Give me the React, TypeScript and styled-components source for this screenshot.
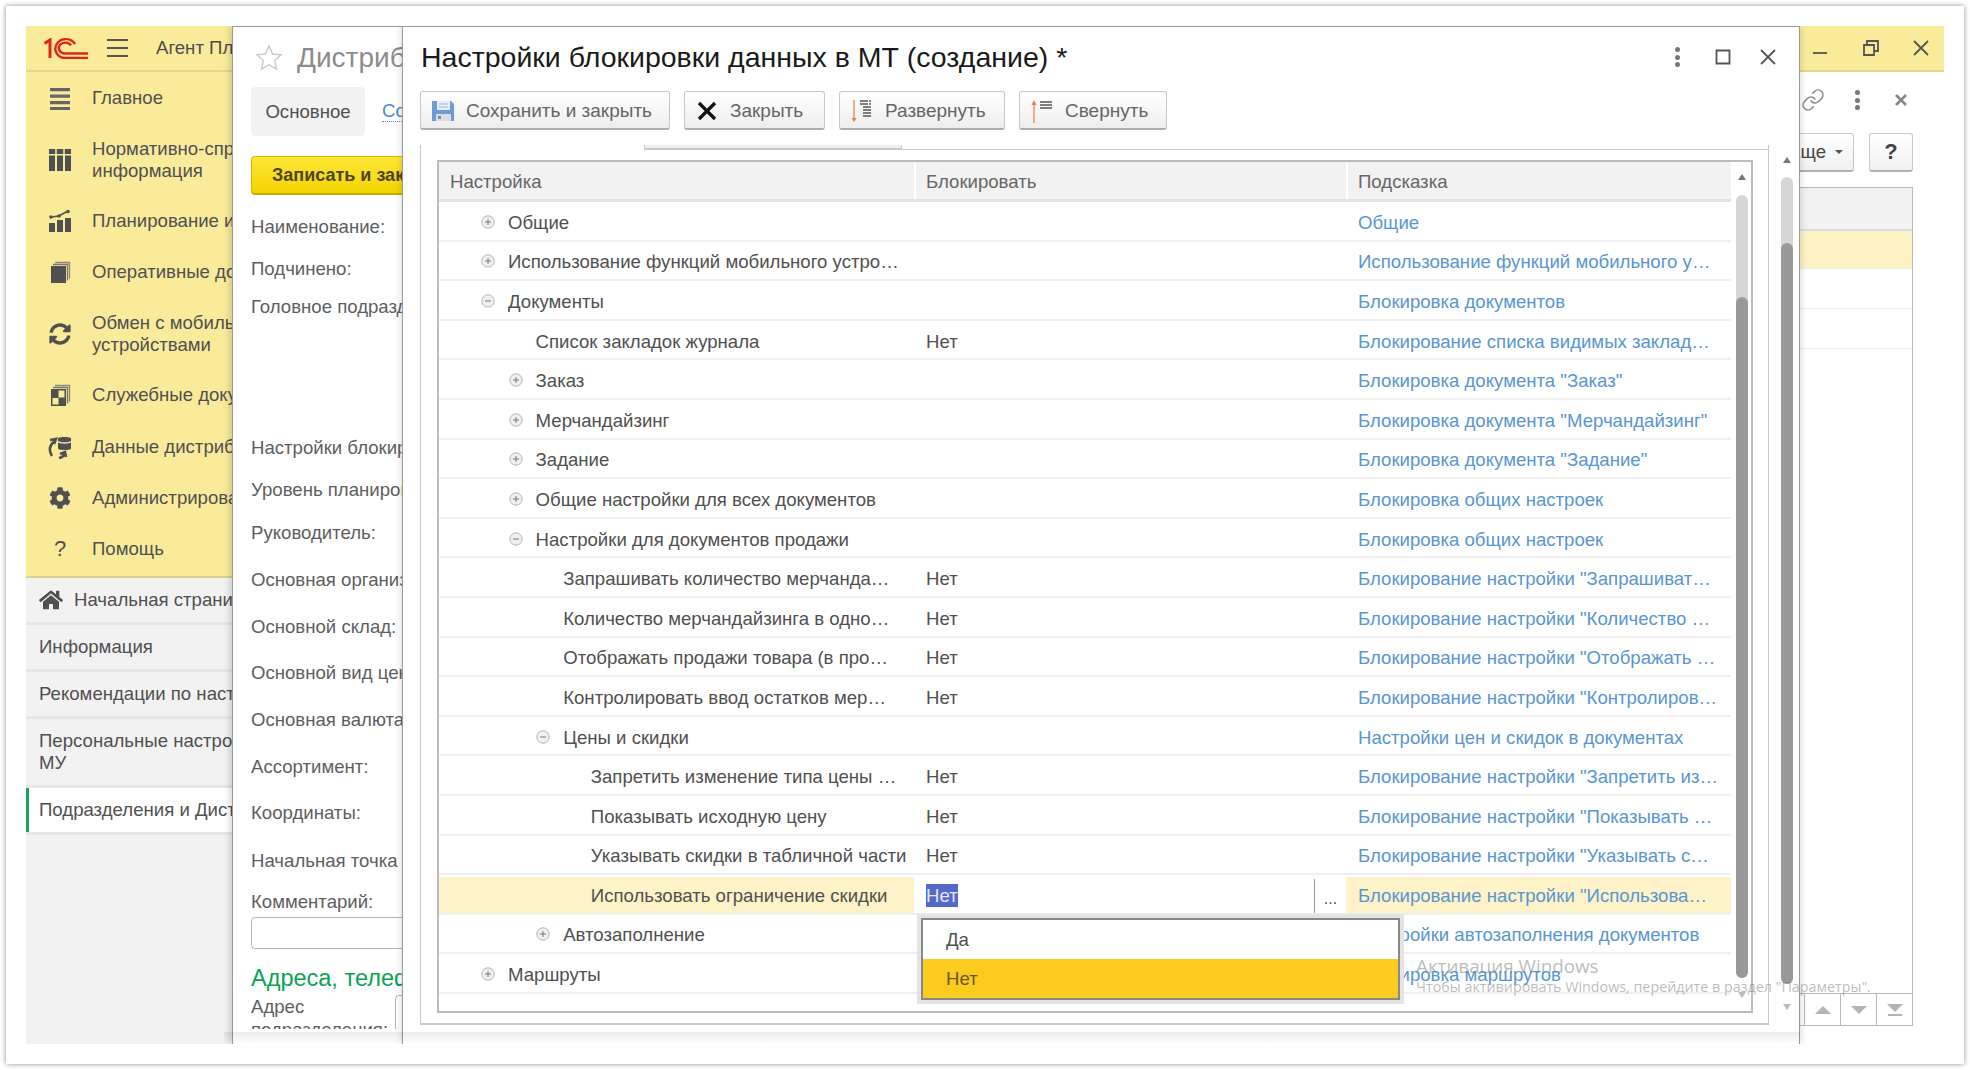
import React from "react";
import styled, { createGlobalStyle } from "styled-components";
import { Link as LinkIcon } from "lucide-react";
import { FaCog, FaHome, FaSyncAlt } from "react-icons/fa";

const FONT = `"Liberation Sans", Arial, sans-serif`;

const GlobalStyle = createGlobalStyle`
  html, body {
    margin: 0;
    padding: 0;
    width: 1970px;
    height: 1070px;
    overflow: hidden;
    background: #ffffff;
    font-family: ${FONT};
  }
  * { box-sizing: border-box; }
`;

const Screen = styled.div`
  width: 1958px;
  height: 1058px;
  margin: 6px;
  padding: 20px;
  background: #ffffff;
  box-shadow: 0 0 5px rgba(0, 0, 0, 0.45);
`;

const Desktop = styled.div`
  position: relative;
  width: 1918px;
  height: 1018px;
  overflow: hidden;
  background: #ffffff;
  font-size: 18.6px;
  color: #505050;
`;

const TopBar = styled.div`
  height: 46px;
  display: flex;
  align-items: center;
  background: #faeb9b;
  border-bottom: 2px solid #e2d68c;
  color: #4d4d4d;
`;

const Logo = styled.svg`
  width: 44px;
  height: 21px;
  margin-left: 18px;
`;

const Burger = styled.svg`
  width: 21px;
  height: 18px;
  margin-left: 19px;
`;

const AppName = styled.span`
  margin-left: 28px;
  white-space: nowrap;
`;

const WinControls = styled.div`
  margin-left: auto;
  display: flex;
  align-items: center;
  margin-right: 13px;
  gap: 30px;
`;

const WinIcon = styled.svg`
  width: 20px;
  height: 20px;
  stroke: #555;
  stroke-width: 1.8;
  fill: none;
`;

const Body = styled.div`
  display: flex;
  height: 972px;
`;

const Sidebar = styled.div`
  width: 206px;
  flex: none;
  display: flex;
  flex-direction: column;
  overflow: hidden;
  background: #f2f2f2;
`;

const MainMenu = styled.div`
  background: #faeb9b;
  border-bottom: 2px solid #ddd08a;
`;

const MenuItem = styled.div<{ $h: number }>`
  height: ${(p) => p.$h}px;
  display: flex;
  align-items: center;
  white-space: nowrap;
  line-height: 22px;
`;

const MenuIcon = styled.div`
  width: 66px;
  flex: none;
  display: flex;
  justify-content: center;
  padding-left: 2px;
  color: #505050;
  font-size: 22px;
`;

const Svg22 = styled.svg`
  width: 24px;
  height: 24px;
  fill: #505050;
`;

const OpenItem = styled.div<{ $h: number; $active?: boolean }>`
  height: ${(p) => p.$h}px;
  flex: none;
  display: flex;
  align-items: center;
  gap: 11px;
  padding-left: 13px;
  white-space: nowrap;
  line-height: 22px;
  border-bottom: 3px solid #e6e6e6;
  background: ${(p) => (p.$active ? "#ffffff" : "transparent")};
  box-shadow: ${(p) => (p.$active ? "inset 3px 0 0 #19a35a" : "none")};
  svg {
    flex: none;
  }
`;

const Content = styled.div`
  flex: 1;
  min-width: 0;
  display: flex;
  flex-direction: column;
  align-items: flex-end;
  padding-right: 31px;
`;

const FormActions = styled.div`
  height: 56px;
  display: flex;
  align-items: center;
  gap: 30px;
  padding-right: 6px;
`;

const Dots = styled.span`
  display: flex;
  flex-direction: column;
  gap: 2.5px;
  i {
    display: block;
    width: 5px;
    height: 5px;
    border-radius: 50%;
    background: #777;
  }
`;

const SmallClose = styled.svg`
  width: 12px;
  height: 12px;
  margin-left: 5px;
  stroke: #888;
  stroke-width: 2.6;
`;

const FormButtons = styled.div`
  margin-top: 5px;
  display: flex;
  gap: 15px;
`;

const MoreButton = styled.div<{ $w: number }>`
  width: ${(p) => p.$w}px;
  height: 39px;
  display: flex;
  align-items: center;
  justify-content: center;
  color: #444;
  background: linear-gradient(#ffffff, #f1f1f1);
  border: 1px solid #c8c8c8;
  border-bottom: 2px solid #b0b0b0;
  border-radius: 3px;
`;

const AllActionsButton = styled(MoreButton)`
  justify-content: flex-end;
  gap: 9px;
  padding-right: 10px;
`;

const Caret = styled.span`
  border-top: 4px solid #555;
  border-left: 4px solid transparent;
  border-right: 4px solid transparent;
`;

const Help = styled.span`
  font-size: 22px;
  font-weight: bold;
  color: #444;
`;

const BackTable = styled.div`
  margin-top: 15px;
  width: 1681px;
  height: 839px;
  display: flex;
  flex-direction: column;
  border: 1.5px solid #b8b8b8;
`;

const BackHead = styled.div`
  height: 43px;
  flex: none;
  background: #f2f2f2;
  border-bottom: 2px solid #dcdcdc;
`;

const BackRow = styled.div<{ $h: number; $selected?: boolean }>`
  height: ${(p) => p.$h}px;
  flex: none;
  background: ${(p) => (p.$selected ? "#fdf2c4" : "#ffffff")};
  border-bottom: 1px solid #ececec;
`;

const Nav = styled.div`
  margin-top: auto;
  height: 32px;
  display: flex;
  justify-content: flex-end;
  border-top: 1.5px solid #b8b8b8;
`;

const NavCell = styled.div`
  width: 36px;
  display: flex;
  align-items: center;
  justify-content: center;
  border-left: 1.5px solid #b8b8b8;
`;

const NavIcon = styled.svg`
  width: 18px;
  height: 14px;
  fill: #b4b4b4;
`;

const Window = styled.div<{ $left: number; $width: number }>`
  position: absolute;
  top: 0;
  left: ${(p) => p.$left}px;
  width: ${(p) => p.$width}px;
  height: 1018px;
  background: #ffffff;
  border-left: 1.5px solid #9a9a9a;
  border-top: 1.5px solid #9a9a9a;
  box-shadow: -3px 0 6px rgba(0, 0, 0, 0.14);
`;

const DistribWindow = styled(Window)`
  overflow: hidden;
  padding-left: 18px;
`;

const DistribClip = styled.div`
  height: 1002px;
  overflow: hidden;
  width: 300px;
`;

const DistribTitle = styled.div`
  height: 60px;
  display: flex;
  align-items: center;
  font-size: 28px;
  color: #8c8c8c;
  white-space: nowrap;
  padding-top: 2px;
`;

const Star = styled.svg`
  width: 28px;
  height: 28px;
  margin: 0 14px 0 4px;
  fill: none;
  stroke: #c8c8c8;
  stroke-width: 1.4;
`;

const Tabs = styled.div`
  display: flex;
  align-items: center;
  gap: 17px;
`;

const ActiveTab = styled.div`
  width: 114px;
  height: 49px;
  display: flex;
  align-items: center;
  justify-content: center;
  background: #f2f2f2;
  border-radius: 4px;
`;

const TabLink = styled.span`
  color: #4a8ad0;
  border-bottom: 1px dotted #4a8ad0;
  line-height: 20px;
`;

const PrimaryButton = styled.div`
  margin-top: 20px;
  width: 260px;
  height: 39px;
  display: flex;
  align-items: center;
  padding-left: 20px;
  font-size: 18px;
  font-weight: bold;
  color: #4d4520;
  white-space: nowrap;
  background: linear-gradient(#ffe838, #f3d400);
  border: 1px solid #d6b800;
  border-bottom: 2px solid #c8ac00;
  border-radius: 4px;
`;

const FieldLabel = styled.div<{ $gap: number }>`
  margin-top: ${(p) => p.$gap}px;
  height: 24px;
  line-height: 24px;
  color: #5e5e5e;
  white-space: nowrap;
`;

const CommentInput = styled.div`
  margin-top: 3px;
  width: 260px;
  height: 32px;
  border: 1.5px solid #b4b4b4;
  border-radius: 4px;
`;

const SectionTitle = styled.div`
  margin-top: 15px;
  height: 28px;
  line-height: 28px;
  font-size: 23.5px;
  color: #0aa455;
  white-space: nowrap;
`;

const AddressRow = styled.div`
  margin-top: 3px;
  display: flex;
  line-height: 23px;
  color: #5e5e5e;
`;

const AddressLabel = styled.span`
  width: 144px;
  flex: none;
`;

const AddressInput = styled.div`
  width: 120px;
  height: 60px;
  border: 1.5px solid #b4b4b4;
  border-radius: 4px;
`;

const Dialog = styled(Window)`
  border-right: 1.5px solid #9a9a9a;
  box-shadow: 0 0 8px rgba(0, 0, 0, 0.18);
`;

const DialogHeader = styled.div`
  height: 64px;
  display: flex;
  align-items: center;
  padding: 0 21px 4px 18px;
`;

const DialogTitle = styled.h1`
  margin: 0;
  font-size: 28.5px;
  font-weight: normal;
  color: #1a1a1a;
  white-space: nowrap;
`;

const DialogControls = styled.div`
  margin-left: auto;
  display: flex;
  align-items: center;
  gap: 25px;
  ${Dots} {
    margin-right: 8px;
  }
`;

const Toolbar = styled.div`
  display: flex;
  gap: 14px;
  padding-left: 17px;
`;

const ToolButton = styled.div<{ $w: number }>`
  width: ${(p) => p.$w}px;
  height: 39px;
  display: flex;
  align-items: center;
  gap: 11px;
  padding: 1px 0 0 10px;
  font-size: 19px;
  color: #666;
  white-space: nowrap;
  background: linear-gradient(#ffffff, #eeeeee);
  border: 1px solid #c8c8c8;
  border-bottom: 2px solid #aeaeae;
  border-radius: 3px;
`;

const ToolIcon = styled.svg`
  width: 24px;
  height: 24px;
  flex: none;
`;

const DialogBody = styled.div`
  margin-top: 15px;
  display: flex;
  padding-left: 17px;
`;

const Frame = styled.div`
  width: 1349px;
  height: 880px;
  border-left: 1.5px solid #c8c8c8;
  border-right: 1.5px solid #c8c8c8;
  border-bottom: 2px solid #c8c8c8;
`;

const FrameTop = styled.div`
  height: 5px;
  display: flex;
`;

const FrameGap = styled.div`
  width: 223px;
`;

const FrameTab = styled.div`
  width: 258px;
  background: #f0f0f0;
  border: 1px solid #c8c8c8;
  border-top: none;
  border-bottom-width: 2px;
`;

const FrameLine = styled.div`
  flex: 1;
  border-bottom: 1.5px solid #c8c8c8;
`;

const TreeTable = styled.div`
  position: relative;
  margin: 10px 0 0 16px;
  width: 1316px;
  height: 853px;
  display: flex;
  border: 2px solid #bcbcbc;
`;

const Rows = styled.div`
  width: 1292px;
  flex: none;
`;

const HeadRow = styled.div`
  display: grid;
  grid-template-columns: 475px 432px 385px;
  height: 40px;
  border-bottom: 3px solid #e2e2e2;
`;

const HeadCell = styled.div`
  display: flex;
  align-items: center;
  padding: 2px 0 0 10px;
  background: #f2f2f2;
  color: #666;
  border-left: 2px solid #ffffff;
  &:first-child {
    border-left: none;
    padding-left: 11px;
  }
`;

const Row = styled.div`
  display: grid;
  grid-template-columns: 475px 432px 385px;
  height: 39.6px;
  border-bottom: 2px solid #efefef;
`;

const NameCell = styled.div<{ $level: number; $selected?: boolean }>`
  display: flex;
  align-items: center;
  padding-left: ${(p) => 42 + p.$level * 27.6}px;
  padding-top: ${(p) => (p.$selected ? "2px" : "4px")};
  white-space: nowrap;
  overflow: hidden;
  background: ${(p) => (p.$selected ? "#fdf2c8" : "transparent")};
  margin-top: ${(p) => (p.$selected ? "2px" : "0")};
`;

const ToggleBox = styled.span`
  width: 27px;
  flex: none;
  display: flex;
  margin-top: -2px;
`;

const ToggleIcon = styled.svg`
  width: 14px;
  height: 14px;
  fill: #f0f0f0;
  stroke: #b4b4b4;
`;

const ValueCell = styled.div`
  display: flex;
  align-items: center;
  padding: 2px 0 0 12px;
  margin-top: 2px;
`;

const Selection = styled.span`
  background: #5468c9;
  color: #e3e7ff;
  line-height: 23px;
`;

const PickButton = styled.span`
  margin-left: auto;
  width: 32px;
  height: 100%;
  display: flex;
  align-items: center;
  justify-content: center;
  padding-top: 6px;
  font-size: 16px;
  border-left: 1.5px solid #9a9a9a;
`;

const HintCell = styled.div<{ $selected?: boolean }>`
  display: flex;
  align-items: center;
  padding-left: 12px;
  padding-top: ${(p) => (p.$selected ? "2px" : "4px")};
  color: #5a95d2;
  white-space: nowrap;
  overflow: hidden;
  background: ${(p) => (p.$selected ? "#fdf2c8" : "transparent")};
  margin-top: ${(p) => (p.$selected ? "2px" : "0")};
`;

const Scroll = styled.div<{ $top: number; $trackH: number; $thumbTop: number; $thumbH: number }>`
  position: relative;
  width: 12px;
  flex: none;
  margin-top: ${(p) => p.$top}px;
  height: ${(p) => p.$trackH}px;
  border-radius: 6px;
  background: #d6d6d6;
  &::after {
    content: "";
    position: absolute;
    left: 0;
    right: 0;
    top: ${(p) => p.$thumbTop}px;
    height: ${(p) => p.$thumbH}px;
    border-radius: 6px;
    background: #999999;
  }
`;

const ScrollColumn = styled.div<{ $left: number }>`
  width: 12px;
  flex: none;
  margin-left: ${(p) => p.$left}px;
  display: flex;
  flex-direction: column;
  align-items: center;
`;

const ArrowUp = styled.span<{ $top: number }>`
  margin-top: ${(p) => p.$top}px;
  height: 0;
  border-bottom: 6px solid #777;
  border-left: 4px solid transparent;
  border-right: 4px solid transparent;
`;

const ArrowDown = styled.span<{ $top: number }>`
  margin-top: ${(p) => p.$top}px;
  height: 0;
  border-top: 6px solid #bbb;
  border-left: 4px solid transparent;
  border-right: 4px solid transparent;
`;

const Dropdown = styled.div`
  position: absolute;
  left: 482px;
  top: 756px;
  width: 479px;
  height: 82px;
  background: #ffffff;
  border: 2px solid #888888;
  box-shadow: 0 0 0 4px #e4e4e4;
`;

const Option = styled.div<{ $active?: boolean }>`
  height: 39px;
  display: flex;
  align-items: center;
  padding-left: 23px;
  background: ${(p) => (p.$active ? "#fbcb1e" : "#ffffff")};
  color: ${(p) => (p.$active ? "#6b5518" : "#505050")};
`;

const BottomShade = styled.div`
  position: absolute;
  left: 198px;
  top: 1006px;
  width: 1576px;
  height: 12px;
  background: linear-gradient(rgba(0, 0, 0, 0.08), rgba(0, 0, 0, 0));
`;

const Watermark = styled.div`
  position: absolute;
  left: 1390px;
  top: 927px;
  font-family: "Open Sans", sans-serif;
  white-space: nowrap;
  color: rgba(120, 120, 120, 0.5);
`;

const WatermarkTitle = styled.div`
  font-size: 18.8px;
  line-height: 26px;
`;

const WatermarkText = styled.div`
  font-size: 14.3px;
  line-height: 20px;
  margin-top: -2px;
`;

interface IRow {
  level: number;
  toggle?: "plus" | "minus";
  name: string;
  value?: string;
  hint: string;
}

const rows: IRow[] = [
  { level: 0, toggle: "plus", name: "Общие", hint: "Общие" },
  { level: 0, toggle: "plus", name: "Использование функций мобильного устро…", hint: "Использование функций мобильного у…" },
  { level: 0, toggle: "minus", name: "Документы", hint: "Блокировка документов" },
  { level: 1, name: "Список закладок журнала", value: "Нет", hint: "Блокирование списка видимых заклад…" },
  { level: 1, toggle: "plus", name: "Заказ", hint: 'Блокировка документа "Заказ"' },
  { level: 1, toggle: "plus", name: "Мерчандайзинг", hint: 'Блокировка документа "Мерчандайзинг"' },
  { level: 1, toggle: "plus", name: "Задание", hint: 'Блокировка документа "Задание"' },
  { level: 1, toggle: "plus", name: "Общие настройки для всех документов", hint: "Блокировка общих настроек" },
  { level: 1, toggle: "minus", name: "Настройки для документов продажи", hint: "Блокировка общих настроек" },
  { level: 2, name: "Запрашивать количество мерчанда…", value: "Нет", hint: 'Блокирование настройки "Запрашиват…' },
  { level: 2, name: "Количество мерчандайзинга в одно…", value: "Нет", hint: 'Блокирование настройки "Количество …' },
  { level: 2, name: "Отображать продажи товара (в про…", value: "Нет", hint: 'Блокирование настройки "Отображать …' },
  { level: 2, name: "Контролировать ввод остатков мер…", value: "Нет", hint: 'Блокирование настройки "Контролиров…' },
  { level: 2, toggle: "minus", name: "Цены и скидки", hint: "Настройки цен и скидок в документах" },
  { level: 3, name: "Запретить изменение типа цены …", value: "Нет", hint: 'Блокирование настройки "Запретить из…' },
  { level: 3, name: "Показывать исходную цену", value: "Нет", hint: 'Блокирование настройки "Показывать …' },
  { level: 3, name: "Указывать скидки в табличной части", value: "Нет", hint: 'Блокирование настройки "Указывать с…' },
  { level: 3, name: "Использовать ограничение скидки", value: "edit", hint: 'Блокирование настройки "Использова…' },
  { level: 2, toggle: "plus", name: "Автозаполнение", hint: "Настройки автозаполнения документов" },
  { level: 0, toggle: "plus", name: "Маршруты", hint: "Блокировка маршрутов" },
];

const fields: [string, number][] = [
  ["Наименование:", 20],
  ["Подчинено:", 18],
  ["Головное подразделение:", 14],
  ["Настройки блокировки:", 117],
  ["Уровень планирования:", 18],
  ["Руководитель:", 19],
  ["Основная организация:", 23],
  ["Основной склад:", 23],
  ["Основной вид цены:", 22],
  ["Основная валюта:", 23],
  ["Ассортимент:", 23],
  ["Координаты:", 22],
  ["Начальная точка маршрута:", 24],
  ["Комментарий:", 17],
];

function Toggle({ kind }: { kind?: "plus" | "minus" }) {
  return (
    <ToggleBox>
      {kind && (
        <ToggleIcon viewBox="0 0 14 14">
          <circle cx="7" cy="7" r="6.2" />
          <path d="M4 7h6" stroke="#777" fill="none" />
          {kind === "plus" && <path d="M7 4v6" stroke="#777" fill="none" />}
        </ToggleIcon>
      )}
    </ToggleBox>
  );
}

function DocsIcon({ checker }: { checker?: boolean }) {
  return (
    <Svg22 viewBox="0 0 24 24">
      <path d="M7 2.500h14.500v16" fill="none" stroke="#8a8a70" strokeWidth="1.4" />
      <path d="M5 4.500h14.500v16" fill="none" stroke="#777" strokeWidth="1.4" />
      <rect x="3" y="6" width="15" height="17" />
      {checker && (
        <>
          <rect x="10.500" y="7.500" width="6" height="7" fill="#faeb9b" />
          <rect x="4.500" y="15" width="6" height="6.500" fill="#faeb9b" />
        </>
      )}
    </Svg22>
  );
}

function App() {
  return (
    <>
      <GlobalStyle />
      <Screen>
        <Desktop>
          <TopBar>
            <Logo viewBox="0 0 44 21" fill="none" stroke="#e1251b" strokeWidth="2.4">
              <path d="M0.500 5.500 L6 2 V20" strokeWidth="3" />
              <path d="M31 6 A10.500 9.500 0 1 0 20 20 H44" />
              <path d="M27 7.500 A6.500 5.500 0 1 0 20 15.500 H44" />
            </Logo>
            <Burger viewBox="0 0 21 18" stroke="#555" strokeWidth="2">
              <path d="M0 1h21M0 9h21M0 17h21" />
            </Burger>
            <AppName>Агент Плюс</AppName>
            <WinControls>
              <WinIcon viewBox="0 0 20 20">
                <path d="M2 15h14" />
              </WinIcon>
              <WinIcon viewBox="0 0 20 20">
                <path d="M3 7h10v10H3zM6 7V3h11v10h-4" />
              </WinIcon>
              <WinIcon viewBox="0 0 20 20">
                <path d="M3 3l14 14M17 3L3 17" />
              </WinIcon>
            </WinControls>
          </TopBar>
          <Body>
            <Sidebar>
              <MainMenu>
                <MenuItem $h={52}>
                  <MenuIcon>
                    <Svg22 viewBox="0 0 24 24">
                      <path d="M2 2h20v3.200H2zM2 8.500h20v3.200H2zM2 15h20v3.200H2zM2 21h20v3H2z" fill="#666" />
                    </Svg22>
                  </MenuIcon>
                  Главное
                </MenuItem>
                <MenuItem $h={72}>
                  <MenuIcon>
                    <Svg22 viewBox="0 0 24 24">
                      <path d="M1 1h22v5H1zM1 7.500h6V23H1zM9 7.500h6V23H9zM17 7.500h6V23h-6z" />
                      <path d="M8 1v5M16 1v5" stroke="#faeb9b" strokeWidth="1.5" />
                    </Svg22>
                  </MenuIcon>
                  <span>
                    Нормативно-справочная
                    <br />
                    информация
                  </span>
                </MenuItem>
                <MenuItem $h={50}>
                  <MenuIcon>
                    <Svg22 viewBox="0 0 24 24">
                      <path d="M1 14h6v9H1zM9 11h6v12H9zM17 9h6v14h-6z" />
                      <path d="M3 8l8-1 9-5" fill="none" stroke="#505050" strokeWidth="1.6" />
                      <circle cx="3" cy="8" r="1.8" />
                      <circle cx="11" cy="7" r="1.8" />
                      <circle cx="20" cy="2.500" r="1.8" />
                    </Svg22>
                  </MenuIcon>
                  Планирование и анализ
                </MenuItem>
                <MenuItem $h={52}>
                  <MenuIcon>
                    <DocsIcon />
                  </MenuIcon>
                  Оперативные документы
                </MenuItem>
                <MenuItem $h={72}>
                  <MenuIcon>
                    <FaSyncAlt size={22} color="#505050" />
                  </MenuIcon>
                  <span>
                    Обмен с мобильными
                    <br />
                    устройствами
                  </span>
                </MenuItem>
                <MenuItem $h={50}>
                  <MenuIcon>
                    <DocsIcon checker />
                  </MenuIcon>
                  Служебные документы
                </MenuItem>
                <MenuItem $h={54}>
                  <MenuIcon>
                    <Svg22 viewBox="0 0 24 24">
                      <path d="M10 3.500C10 1.500 23 1.500 23 3.500v10c0 2-13 2-13 0z" />
                      <path d="M10 6.500c2 2 11 2 13 0" fill="none" stroke="#faeb9b" strokeWidth="1.4" />
                      <path d="M7 6C2 9 0 15 4 21M6 9L8 4 2 5M17 18c-1 3-3 4.500-6 5M12 19l5-2 1 5" fill="none" stroke="#505050" strokeWidth="2.600" />
                    </Svg22>
                  </MenuIcon>
                  Данные дистрибьютора
                </MenuItem>
                <MenuItem $h={48}>
                  <MenuIcon>
                    <FaCog size={22} />
                  </MenuIcon>
                  Администрирование
                </MenuItem>
                <MenuItem $h={54}>
                  <MenuIcon>?</MenuIcon>
                  Помощь
                </MenuItem>
              </MainMenu>
              <OpenItem $h={47}>
                <FaHome size={24} color="#505050" />
                Начальная страница
              </OpenItem>
              <OpenItem $h={47}>Информация</OpenItem>
              <OpenItem $h={47}>Рекомендации по настройке</OpenItem>
              <OpenItem $h={69}>
                <span>
                  Персональные настройки
                  <br />
                  МУ
                </span>
              </OpenItem>
              <OpenItem $h={47} $active>
                Подразделения и Дистрибьюторы
              </OpenItem>
            </Sidebar>
            <Content>
              <FormActions>
                <LinkIcon size={24} strokeWidth={1.6} color="#8a8a8a" />
                <Dots>
                  <i />
                  <i />
                  <i />
                </Dots>
                <SmallClose viewBox="0 0 12 12">
                  <path d="M1 1l10 10M11 1L1 11" />
                </SmallClose>
              </FormActions>
              <FormButtons>
                <AllActionsButton $w={100}>
                  Еще <Caret />
                </AllActionsButton>
                <MoreButton $w={44}>
                  <Help>?</Help>
                </MoreButton>
              </FormButtons>
              <BackTable>
                <BackHead />
                <BackRow $h={38} $selected />
                <BackRow $h={40} />
                <BackRow $h={40} />
                <Nav>
                  <NavCell>
                    <NavIcon viewBox="0 0 18 14">
                      <path d="M9 3l8 8H1z" />
                    </NavIcon>
                  </NavCell>
                  <NavCell>
                    <NavIcon viewBox="0 0 18 14">
                      <path d="M1 3h16l-8 8z" />
                    </NavIcon>
                  </NavCell>
                  <NavCell>
                    <NavIcon viewBox="0 0 18 14">
                      <path d="M1 1h16l-8 8zM2 11h14v2H2z" />
                    </NavIcon>
                  </NavCell>
                </Nav>
              </BackTable>
            </Content>
          </Body>

          <DistribWindow $left={206} $width={172}>
            <DistribClip>
              <DistribTitle>
                <Star viewBox="0 0 28 28">
                  <path d="M14 2l3.600 8 8.400.9-6.300 5.700 1.800 8.400L14 20.700l-7.500 4.300 1.800-8.400L2 10.900l8.400-.9z" />
                </Star>
                Дистрибьютор
              </DistribTitle>
              <Tabs>
                <ActiveTab>Основное</ActiveTab>
                <TabLink>Состав</TabLink>
              </Tabs>
              <PrimaryButton>Записать и закрыть</PrimaryButton>
              {fields.map(([label, gap]) => (
                <FieldLabel key={label} $gap={gap}>
                  {label}
                </FieldLabel>
              ))}
              <CommentInput />
              <SectionTitle>Адреса, телефоны</SectionTitle>
              <AddressRow>
                <AddressLabel>
                  Адрес
                  <br />
                  подразделения:
                </AddressLabel>
                <AddressInput />
              </AddressRow>
            </DistribClip>
          </DistribWindow>

          <Dialog $left={376} $width={1398}>
            <DialogHeader>
              <DialogTitle>Настройки блокировки данных в МТ (создание) *</DialogTitle>
              <DialogControls>
                <Dots>
                  <i />
                  <i />
                  <i />
                </Dots>
                <WinIcon viewBox="0 0 20 20">
                  <path d="M3.500 3.500h13v13h-13z" />
                </WinIcon>
                <WinIcon viewBox="0 0 20 20">
                  <path d="M3 3l14 14M17 3L3 17" />
                </WinIcon>
              </DialogControls>
            </DialogHeader>
            <Toolbar>
              <ToolButton $w={250}>
                <ToolIcon viewBox="0 0 24 24">
                  <path d="M1 2h19l3 3v17H1z" fill="#6f9ad6" />
                  <rect x="6" y="2" width="13" height="9" fill="#e6eef9" />
                  <path d="M8 5h9M8 8h9" stroke="#9db8dd" />
                  <rect x="5" y="15" width="15" height="7" fill="#d9dde3" />
                  <rect x="7" y="17" width="3" height="3" fill="#6f8fb8" />
                </ToolIcon>
                Сохранить и закрыть
              </ToolButton>
              <ToolButton $w={141}>
                <ToolIcon viewBox="0 0 24 24">
                  <path d="M4 4l16 16M20 4L4 20" stroke="#111" strokeWidth="3.200" />
                </ToolIcon>
                Закрыть
              </ToolButton>
              <ToolButton $w={166}>
                <ToolIcon viewBox="0 0 24 24">
                  <path d="M4 1v20" stroke="#f09a6a" strokeWidth="1.6" />
                  <path d="M1.500 19h5L4 23z" fill="#ea7f45" />
                  <path d="M10 2h11M10 5h11M13 8h8M13 11h8M13 14h8M13 17h8" stroke="#555" strokeWidth="1.4" strokeDasharray="8 1" />
                </ToolIcon>
                Развернуть
              </ToolButton>
              <ToolButton $w={148}>
                <ToolIcon viewBox="0 0 24 24">
                  <path d="M4 5v19" stroke="#f09a6a" strokeWidth="1.6" />
                  <path d="M1.500 6h5L4 1z" fill="#ea7f45" />
                  <path d="M10 3h12M10 6h12M10 9h12" stroke="#555" strokeWidth="1.5" />
                </ToolIcon>
                Свернуть
              </ToolButton>
            </Toolbar>
            <DialogBody>
              <Frame>
                <FrameTop>
                  <FrameGap />
                  <FrameTab />
                  <FrameLine />
                </FrameTop>
                <TreeTable>
                  <Rows>
                    <HeadRow>
                      <HeadCell>Настройка</HeadCell>
                      <HeadCell>Блокировать</HeadCell>
                      <HeadCell>Подсказка</HeadCell>
                    </HeadRow>
                    {rows.map((row) => {
                      const editing = row.value === "edit";
                      return (
                        <Row key={row.name}>
                          <NameCell $level={row.level} $selected={editing}>
                            <Toggle kind={row.toggle} />
                            {row.name}
                          </NameCell>
                          <ValueCell>
                            {editing ? (
                              <>
                                <Selection>Нет</Selection>
                                <PickButton>...</PickButton>
                              </>
                            ) : (
                              row.value
                            )}
                          </ValueCell>
                          <HintCell $selected={editing}>{row.hint}</HintCell>
                        </Row>
                      );
                    })}
                  </Rows>
                  <ScrollColumn $left={5}>
                    <ArrowUp $top={12} />
                    <Scroll $top={15} $trackH={783} $thumbTop={102} $thumbH={681} />
                    <ArrowDown $top={14} />
                  </ScrollColumn>
                  <Dropdown>
                    <Option>Да</Option>
                    <Option $active>Нет</Option>
                  </Dropdown>
                </TreeTable>
              </Frame>
              <ScrollColumn $left={12}>
                <ArrowUp $top={12} />
                <Scroll $top={14} $trackH={807} $thumbTop={66} $thumbH={741} />
                <ArrowDown $top={20} />
              </ScrollColumn>
            </DialogBody>
          </Dialog>

          <BottomShade />
          <Watermark>
            <WatermarkTitle>Активация Windows</WatermarkTitle>
            <WatermarkText>Чтобы активировать Windows, перейдите в раздел "Параметры".</WatermarkText>
          </Watermark>
        </Desktop>
      </Screen>
    </>
  );
}

export default App;
